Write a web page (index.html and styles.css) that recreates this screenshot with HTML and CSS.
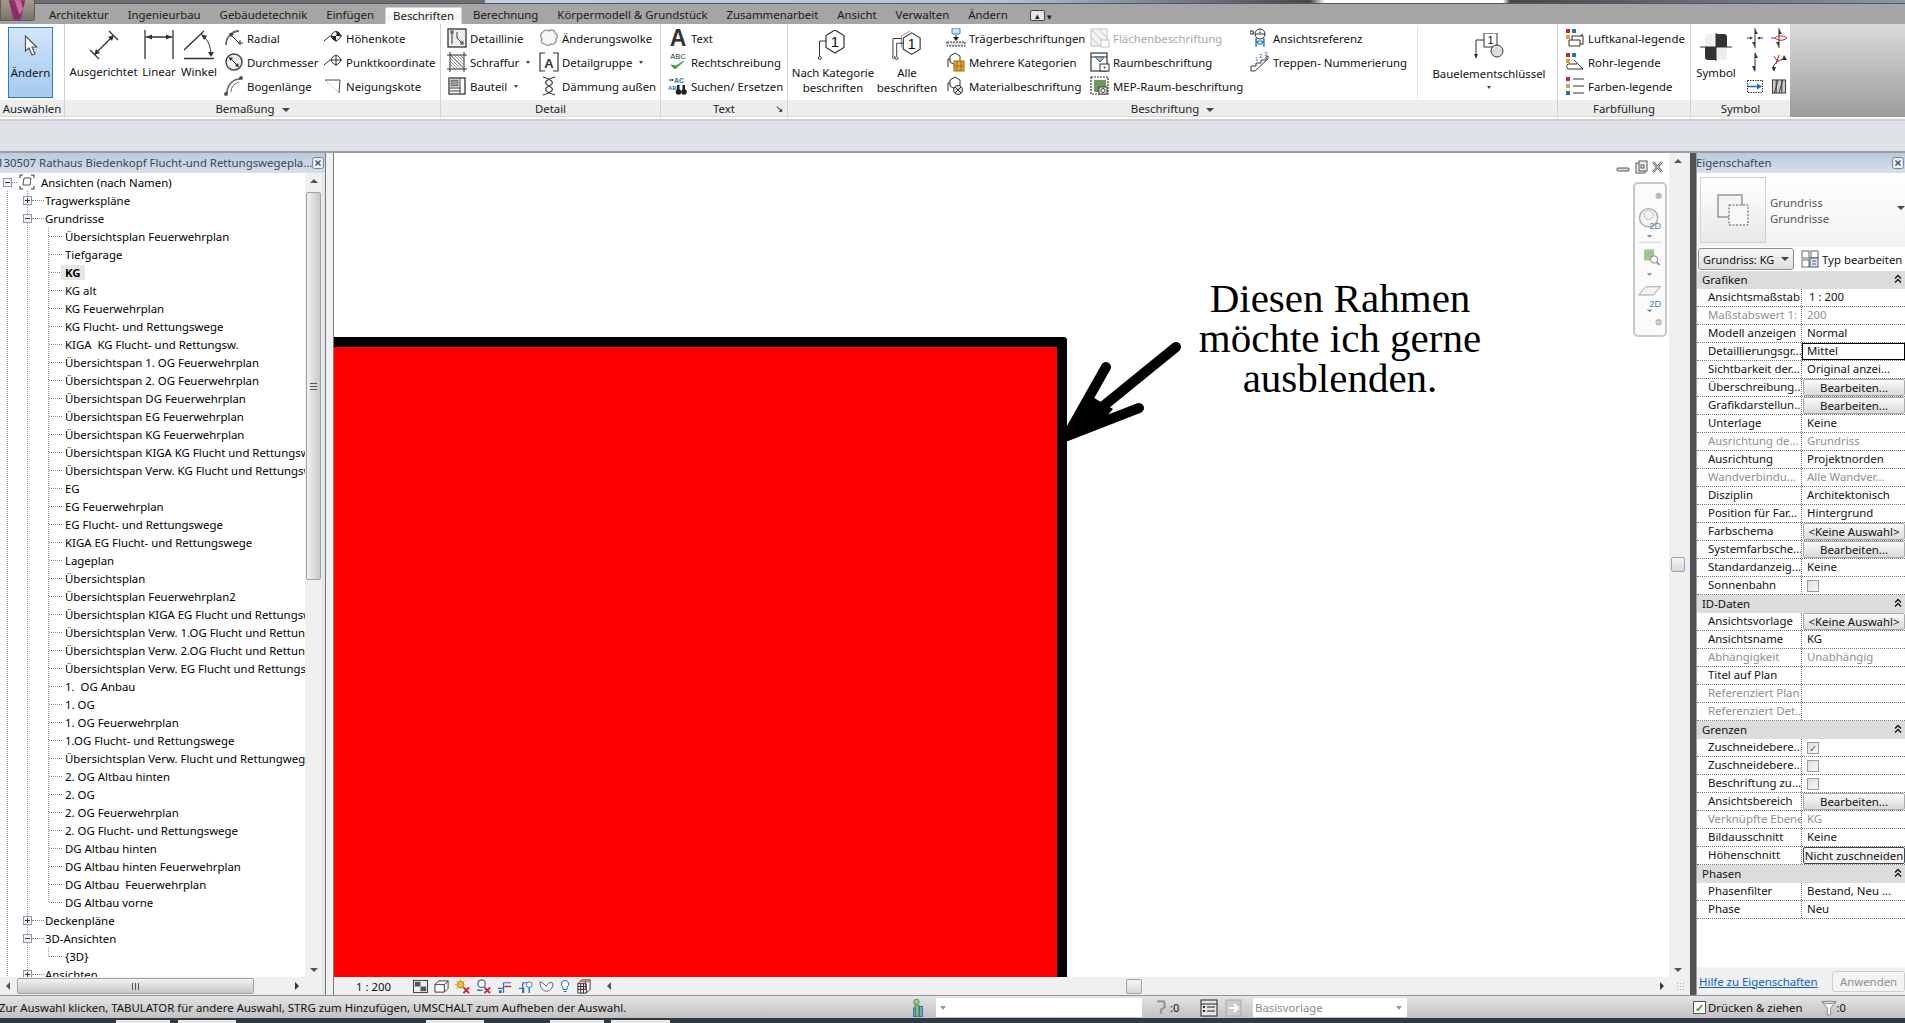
FILE: index.html
```html
<!DOCTYPE html>
<html lang="de">
<head>
    <meta charset="UTF-8">
    <title>Revit - Beschriften</title>
    <link rel="stylesheet" href="styles.css">
</head>
<body>
    <!-- icon sprite -->
    <svg class="sprite" xmlns="http://www.w3.org/2000/svg">
        <symbol id="i-cursor" viewBox="0 0 14 22"><path d="M1.5 1v15l3.5-3 3 7 3-1.300-3-6.700h4.500z" fill="#fff" stroke="#555" stroke-width="1.200"/></symbol>
        <symbol id="i-aligned" viewBox="0 0 30 30"><path d="M1 20l9 9M20 1l9 9" stroke="#333" stroke-width="1.300" fill="none"/><path d="M6 24L24 6" stroke="#333" stroke-width="1.300"/><path d="M5 25l2-6 4 4zM25 5l-2 6-4-4z" fill="#333"/></symbol>
        <symbol id="i-linear" viewBox="0 0 30 30"><path d="M1 0v29M29 0v29M2 7h26" stroke="#333" stroke-width="1.300" fill="none"/><path d="M2 7l6-2.500v5zM28 7l-6-2.500v5z" fill="#333"/></symbol>
        <symbol id="i-angle" viewBox="0 0 30 30"><path d="M0 28.500h30M0 20L20 1" stroke="#333" stroke-width="1.300" fill="none"/><path d="M19 6c5 4 8 11 8 20" stroke="#333" fill="none"/><path d="M17 4l6 2-3 4zM27 27l-3-5h6z" fill="#333"/></symbol>
        <symbol id="i-radial" viewBox="0 0 20 20"><path d="M2 17C2 9 8 3 15 3" stroke="#666" stroke-width="1.800" fill="none"/><path d="M6 6l9 9M16 12v5M14 15h5" stroke="#333" fill="none"/><path d="M5 5l5 1-3 3z" fill="#333"/></symbol>
        <symbol id="i-diameter" viewBox="0 0 20 20"><circle cx="10" cy="10" r="8" fill="#eee" stroke="#444" stroke-width="1.500"/><path d="M6 6l8 8" stroke="#333"/><path d="M5 5l4 1-3 3zM15 15l-4-1 3-3z" fill="#333"/></symbol>
        <symbol id="i-arc" viewBox="0 0 20 20"><path d="M3 17C3 9 9 3 16 3" stroke="#666" stroke-width="1.600" fill="none"/><path d="M7 16C7 11 11 7 15 6" stroke="#666" fill="none"/><rect x="1" y="17" width="2" height="2" fill="#fff" stroke="#000"/><rect x="16" y="1" width="2" height="2" fill="#fff" stroke="#000"/></symbol>
        <symbol id="i-spot" viewBox="0 0 20 20"><path d="M1 13l6-5h12M13 3v11" stroke="#333" fill="none"/><circle cx="13" cy="8" r="4.500" fill="#fff" stroke="#333"/><path d="M13 3.500a4.500 4.500 0 0 1 0 4.500h4.500a4.500 4.500 0 0 0-4.500-4.500zM13 8v4.500a4.500 4.500 0 0 1-4.500-4.500z" fill="#222"/></symbol>
        <symbol id="i-coord" viewBox="0 0 20 20"><path d="M1 13l6-5h12M13 3v11" stroke="#333" fill="none"/><circle cx="13" cy="8" r="4.500" fill="none" stroke="#333"/></symbol>
        <symbol id="i-slope" viewBox="0 0 20 20"><path d="M2 4l14 13" stroke="#8fb0d0" stroke-dasharray="1.500 1" fill="none"/><path d="M2 4h15l-1 13" stroke="#444" fill="none"/></symbol>
        <symbol id="i-detail" viewBox="0 0 20 20"><rect x="1" y="1" width="18" height="18" fill="#eee" stroke="#333" stroke-width="1.300"/><path d="M5 4v12M15 15L10 10V4" stroke="#333" fill="none"/><rect x="4" y="3" width="2" height="2" fill="#fff" stroke="#333"/><rect x="14" y="14" width="2" height="2" fill="#fff" stroke="#333"/></symbol>
        <symbol id="i-hatch" viewBox="0 0 20 20"><path d="M4 3l12 12M7 3l10 10M10 3l7 7M13 3l4 4M3 6l11 11M3 9l8 8M3 12l5 5M3 3l14 14" stroke="#777" stroke-width=".8"/><path d="M3 0v20M17 0v20M0 3h20M0 17h20" stroke="#333"/></symbol>
        <symbol id="i-part" viewBox="0 0 20 20"><rect x="2" y="2" width="16" height="16" fill="#fff" stroke="#333" stroke-width="1.300"/><rect x="4" y="4" width="7" height="6" fill="#999" stroke="#333" stroke-width=".6"/><path d="M13 3v14M3 12h10M3 15h10" stroke="#333" fill="none"/></symbol>
        <symbol id="i-cloud" viewBox="0 0 20 20"><path d="M4 4c2-3 5-2 6-1 2-2 6-1 6 2 3 1 3 5 1 6 1 4-3 6-5 5-2 2-5 2-6 0-3 0-5-3-3-5-2-2-2-6 1-7z" fill="#f7f7f7" stroke="#888" stroke-width="1.200"/></symbol>
        <symbol id="i-group" viewBox="0 0 20 20"><path d="M6 1H1v18h5M14 1h5v18h-5" stroke="#333" stroke-width="1.200" fill="none" transform="translate(0 0)"/><text x="10" y="16" text-anchor="middle" font-size="13" font-weight="700" font-family="Liberation Sans" fill="#333">A</text></symbol>
        <symbol id="i-insul" viewBox="0 0 20 20"><path d="M4 1c10 3 12 6 6 9-6 3-4 6 6 9M16 1C6 4 4 7 10 10c6 3 4 6-6 9" stroke="#333" stroke-width="1.200" fill="none"/></symbol>
        <symbol id="i-abc" viewBox="0 0 20 20"><text x="10" y="7" text-anchor="middle" font-size="7.500" font-family="Liberation Sans" fill="#333">ABC</text><path d="M3 13l4 4 9-8-8 5z" fill="#3da33d" stroke="#3da33d"/></symbol>
        <symbol id="i-find" viewBox="0 0 20 20"><text x="6" y="7" font-size="7" font-weight="700" font-family="Liberation Sans" fill="#1b6fb8">AC</text><text x="0" y="14" font-size="6" font-weight="700" font-family="Liberation Sans" fill="#1b6fb8">AB</text><path d="M1 4h4" stroke="#222"/><path d="M4 3l2 1-2 1z" fill="#222"/><circle cx="10.500" cy="16" r="2.800" fill="#222"/><circle cx="16" cy="16" r="2.800" fill="#222"/><rect x="9" y="9" width="2.500" height="5" fill="#222"/><rect x="14.500" y="9" width="2.500" height="5" fill="#222"/></symbol>
        <symbol id="i-tag" viewBox="0 0 30 32"><path d="M17 0l9 5.500v12L17 23l-9-5.500v-12z" fill="#fff" stroke="#333" stroke-width="1.200"/><path d="M8 11H1.500v15" stroke="#333" fill="none"/><circle cx="1.800" cy="28" r="1.500" fill="#fff" stroke="#333"/><text x="17" y="17" text-anchor="middle" font-size="15" font-family="Liberation Sans" fill="#111">1</text></symbol>
        <symbol id="i-tagall" viewBox="0 0 32 34"><path d="M19 1l-9 5.500v12" stroke="#888" fill="none"/><path d="M21 3l9 5.500v12L21 26l-9-5.500v-12z" fill="#fff" stroke="#333" stroke-width="1.200"/><path d="M12 14H5v14M10 9H1v18" stroke="#333" fill="none"/><circle cx="5" cy="30" r="1.400" fill="#fff" stroke="#333"/><circle cx="1.500" cy="29" r="1.400" fill="#fff" stroke="#333"/><text x="21" y="20" text-anchor="middle" font-size="15" font-family="Liberation Sans" fill="#111">1</text></symbol>
        <symbol id="i-beam" viewBox="0 0 20 20"><rect x="6" y="0" width="8" height="6" rx="1" fill="#cfe4f7" stroke="#2a7fc4"/><path d="M10 7v4" stroke="#222"/><path d="M7 9l3 4 3-4z" fill="#222"/><rect x="1" y="14" width="18" height="4" fill="#ddd" stroke="#333" stroke-dasharray="2 1"/></symbol>
        <symbol id="i-multi" viewBox="0 0 20 20"><path d="M9 1l5 3v6l-5 3-5-3V4z" fill="#fff" stroke="#333"/><path d="M4 7H2v8" stroke="#333" fill="none"/><rect x="8" y="9" width="10" height="10" fill="#e8a93a" stroke="#9a6a12"/><path d="M11 9v10M15 9v10M8 14h10" stroke="#9a6a12"/></symbol>
        <symbol id="i-material" viewBox="0 0 20 20"><path d="M9 1l5 3v6l-5 3-5-3V4z" fill="#fff" stroke="#333"/><path d="M4 7H2v8" stroke="#333" fill="none"/><circle cx="12" cy="14" r="4.500" fill="#ddd" stroke="#333"/><path d="M9 11l6 6M15 11l-6 6" stroke="#333"/></symbol>
        <symbol id="i-area" viewBox="0 0 20 20" opacity=".35"><rect x="1" y="1" width="16" height="17" fill="#ddd" stroke="#555"/><path d="M1 1l16 17M9 1l8 9M1 9l8 9" stroke="#555"/><rect x="11" y="12" width="8" height="7" fill="#fff" stroke="#555"/></symbol>
        <symbol id="i-room" viewBox="0 0 20 20"><rect x="1" y="1" width="16" height="18" fill="#fff" stroke="#333" stroke-width="1.200"/><path d="M1 5h16" stroke="#333"/><path d="M5 5h9l-4 5z" fill="#a8c8e8" stroke="#456"/><rect x="10" y="12" width="9" height="7" fill="#fff" stroke="#333"/><circle cx="14.500" cy="15.500" r="1" fill="#333"/></symbol>
        <symbol id="i-mep" viewBox="0 0 20 20"><rect x="1" y="1" width="17" height="17" fill="#fff" stroke="#333" stroke-width="1.200" stroke-dasharray="2 1"/><rect x="4" y="4" width="12" height="12" fill="#6f9a5e"/><rect x="9" y="11" width="8" height="7" fill="#fff" stroke="#333"/><circle cx="13" cy="14.500" r="2" fill="#fff" stroke="#333"/></symbol>
        <symbol id="i-viewref" viewBox="0 0 20 20"><path d="M0 5h4" stroke="#333"/><rect x="0" y="3" width="3" height="3" fill="#fff" stroke="#333"/><circle cx="10" cy="6" r="5" fill="#fff" stroke="#333"/><path d="M5 6h10" stroke="#333"/><path d="M7 11H6v7h1M13 11h1v7h-1M6 14h8" stroke="#1b6fb8" stroke-width="1.300" fill="none"/><rect x="8" y="13" width="4" height="3" fill="#fff" stroke="#1b6fb8"/><text x="10" y="5" text-anchor="middle" font-size="5" font-family="Liberation Sans" fill="#222">1</text></symbol>
        <symbol id="i-stairs" viewBox="0 0 20 20"><path d="M1 14h5v-3h5V8h5V5l2-1M1 14v5h4l13-12V4" fill="#f4f4f4" stroke="#444"/><text x="5" y="9" font-size="6" font-family="Liberation Sans" fill="#1b6fb8">1</text><text x="9" y="6" font-size="6" font-family="Liberation Sans" fill="#1b6fb8">2</text><text x="14" y="4" font-size="6" font-family="Liberation Sans" fill="#1b6fb8">3</text></symbol>
        <symbol id="i-key" viewBox="0 0 30 26"><rect x="10" y="0" width="13" height="14" fill="#fff" stroke="#333"/><text x="16.500" y="11" text-anchor="middle" font-size="11" font-family="Liberation Sans" fill="#111">1</text><circle cx="23" cy="18" r="6" fill="#ddd" stroke="#333"/><path d="M10 7H2v17" stroke="#333" fill="none"/><path d="M0 21l2 5 2-5z" fill="#333"/></symbol>
        <symbol id="i-duct" viewBox="0 0 20 20"><rect x="1" y="1" width="4" height="4" fill="#b8312f"/><rect x="7" y="1" width="4" height="4" fill="#2a6fb5"/><rect x="1" y="7" width="4" height="4" fill="#e59b2b"/><rect x="7" y="8" width="11" height="8" fill="#fff" stroke="#333"/><path d="M4 12h11v6H4zM15 8l3-2" stroke="#333" fill="#fff"/></symbol>
        <symbol id="i-pipe" viewBox="0 0 20 20"><rect x="1" y="1" width="4" height="4" fill="#b8312f"/><rect x="7" y="1" width="4" height="4" fill="#2a6fb5"/><rect x="1" y="7" width="4" height="4" fill="#e59b2b"/><path d="M9 8l9 9H3a3 3 0 0 1 0-5h9" fill="#fff" stroke="#333"/></symbol>
        <symbol id="i-colors" viewBox="0 0 20 20"><rect x="1" y="1" width="4" height="4" fill="#b8312f"/><rect x="1" y="8" width="4" height="4" fill="#e59b2b"/><rect x="1" y="15" width="4" height="4" fill="#2a6fb5"/><path d="M8 3h11M8 10h11M8 17h11" stroke="#333"/></symbol>
        <symbol id="i-symbol" viewBox="0 0 32 28"><rect x="5" y="1" width="22" height="26" rx="3" fill="#eee"/><path d="M16 1h8a3 3 0 0 1 3 3v10H16zM5 14h11v13H8a3 3 0 0 1-3-3z" fill="#333"/><path d="M0 14h32M16 0v28" stroke="#333"/></symbol>
        <symbol id="i-sym1" viewBox="0 0 16 20"><path d="M8 0v20M0 10h3M13 10h3" stroke="#333"/><path d="M8 1l3 5H8zM8 19l-3-5h3zM3 8.500L6 10l-3 1.500zM13 8.500L10 10l3 1.500z" fill="#333"/></symbol>
        <symbol id="i-sym2" viewBox="0 0 16 20"><path d="M8 0v20" stroke="#333"/><path d="M8 1l3 5H8zM8 19l-3-5h3z" fill="#333"/><path d="M0 10h4c3-3 8-3 12 0-4 3-8 3-12 0" stroke="#d01c1c" fill="none"/></symbol>
        <symbol id="i-sym3" viewBox="0 0 16 20"><path d="M8 1v18" stroke="#333"/><path d="M8 0l3 6H8zM8 20l-3-6h3z" fill="#333"/></symbol>
        <symbol id="i-sym4" viewBox="0 0 16 20"><path d="M2 18c0-6 4-10 12-11" stroke="#333" fill="none"/><path d="M13 3l3 5h-5zM3 20l-2-5h4z" fill="#333"/><path d="M3 4l4 6M8 3l-3 9" stroke="#d01c1c"/></symbol>
        <symbol id="i-sym5" viewBox="0 0 16 14"><rect x=".5" y="1" width="15" height="12" fill="#fff" stroke="#333" stroke-dasharray="1.500 1"/><path d="M1 7h10" stroke="#1b6fb8" stroke-width="1.500"/><path d="M10 4l5 3-5 3z" fill="#1b6fb8"/></symbol>
        <symbol id="i-sym6" viewBox="0 0 16 16"><rect x="1" y="1" width="14" height="14" fill="#ccc" stroke="#333"/><path d="M3 15L7 1M8 15l4-14M5 15V1M11 15V1" stroke="#333" fill="none"/></symbol>
        <symbol id="i-views" viewBox="0 0 16 16"><path d="M1 4V1h3M12 1h3v3M15 12v3h-3M4 15H1v-3" stroke="#333" fill="none"/><path d="M5 4h7l-1 7H4z" fill="#fff" stroke="#555"/></symbol>
        <symbol id="i-close" viewBox="0 0 12 12"><rect x=".5" y=".5" width="11" height="11" rx="2" fill="#e8edf3" stroke="#7a8795"/><path d="M3.500 3.500l5 5M8.500 3.500l-5 5" stroke="#445" stroke-width="1.300"/></symbol>
        <symbol id="i-fold" viewBox="0 0 8 10"><path d="M1 4.500L4 1.500l3 3M1 8.500L4 5.500l3 3" stroke="#111" stroke-width="1.300" fill="none"/></symbol>
        <symbol id="i-sheets" viewBox="0 0 32 32"><rect x="1" y="1" width="24" height="22" fill="#f4f4f4" stroke="#666"/><rect x="12" y="11" width="19" height="20" fill="#f8f8f8" stroke="#555" stroke-dasharray="2 1.500"/></symbol>
        <symbol id="i-edit" viewBox="0 0 18 18"><rect x="1" y="1" width="7" height="7" fill="#fff" stroke="#666"/><rect x="10" y="1" width="7" height="7" fill="#fff" stroke="#666"/><rect x="1" y="10" width="7" height="7" fill="#fff" stroke="#666"/><rect x="9" y="8" width="8" height="9" fill="#dbe8f5" stroke="#456"/><path d="M11 11h4M11 14h4" stroke="#456"/></symbol>
        <symbol id="i-funnel" viewBox="0 0 20 20"><path d="M1 2h18l-7 8v8l-4 1v-9z" fill="#fff" stroke="#777"/><ellipse cx="10" cy="3" rx="8" ry="1.500" fill="#ddd" stroke="#777"/></symbol>
        <symbol id="i-vb1" viewBox="0 0 16 14"><rect x=".5" y=".5" width="15" height="13" fill="#eee" stroke="#333"/><rect x="2" y="2" width="6" height="5" fill="#555"/><rect x="8" y="7" width="6" height="5" fill="#555"/></symbol>
        <symbol id="i-vb2" viewBox="0 0 16 14"><path d="M1 5h10v8H1zM1 5l4-4h10l-4 4M11 13l4-4V1" fill="#fff" stroke="#333"/></symbol>
        <symbol id="i-vb3" viewBox="0 0 16 16"><circle cx="6" cy="6" r="3.500" fill="#f2c22e" stroke="#a97c10"/><path d="M6 0v2M0 6h2M1.500 1.500L3 3M10.500 1.500L9 3M1.500 10.500L3 9" stroke="#d79a1a"/><path d="M9 9l6 6M15 9l-6 6" stroke="#c22" stroke-width="2"/></symbol>
        <symbol id="i-vb4" viewBox="0 0 16 16"><circle cx="6" cy="5" r="4" fill="#fff" stroke="#2a6fb5" stroke-width="1.300"/><path d="M1 12h6" stroke="#2a6fb5" stroke-width="1.500"/><path d="M9 9l6 6M15 9l-6 6" stroke="#c22" stroke-width="2"/></symbol>
        <symbol id="i-vb5" viewBox="0 0 16 16"><path d="M1 10h6v5M7 4h8M7 4v11" stroke="#2a6fb5" stroke-width="1.300" fill="none"/><path d="M8 8h7" stroke="#c22" stroke-width="1.500"/><rect x="2" y="12" width="3" height="3" fill="#2a6fb5"/></symbol>
        <symbol id="i-vb6" viewBox="0 0 16 16"><path d="M1 10h5v5M5 4h5M5 4v11" stroke="#2a6fb5" stroke-width="1.300" fill="none"/><circle cx="12" cy="6" r="3" fill="#fff" stroke="#2a6fb5"/><path d="M12 9v6" stroke="#2a6fb5" stroke-width="1.500"/></symbol>
        <symbol id="i-vb7" viewBox="0 0 16 14"><path d="M1 2c0 7 4 10 7 10s7-3 7-8c-3-3-6 0-7 3-2-2-5-5-7-5z" fill="#fff" stroke="#456"/></symbol>
        <symbol id="i-vb8" viewBox="0 0 10 14"><path d="M5 1a3.500 3.500 0 0 1 2 6.500V10H3V7.500A3.500 3.500 0 0 1 5 1z" fill="#fff" stroke="#2a6fb5"/><path d="M3.500 12h3" stroke="#2a6fb5"/></symbol>
        <symbol id="i-vb9" viewBox="0 0 16 16"><path d="M2 5h9v10H2zM2 5l4-4h9v10l-4 4M5 5v10M8 5v10M2 8h9M2 11h9" fill="#fff" stroke="#222"/><path d="M5 3h9M10 2v9" stroke="#c22"/></symbol>
        <symbol id="i-worksets" viewBox="0 0 14 26"><circle cx="5" cy="5" r="3.500" fill="#9ccf84" stroke="#4a7a3a"/><path d="M3 9h5v15H3z" fill="#8bc27a" stroke="#4a7a3a"/><rect x="9" y="11" width="4" height="13" fill="#6ea7d8" stroke="#27628f"/><rect x="1" y="13" width="3" height="11" fill="#6ea7d8" stroke="#27628f"/></symbol>
        <symbol id="i-design" viewBox="0 0 18 18"><rect x="1" y="1" width="16" height="16" fill="#e4e4e4" stroke="#222"/><path d="M1 5h16" stroke="#222"/><rect x="3" y="7" width="2" height="2" fill="#222"/><rect x="3" y="11" width="2" height="2" fill="#222"/><path d="M7 8h8M7 12h8" stroke="#222"/></symbol>
        <symbol id="i-design2" viewBox="0 0 18 18"><rect x="1" y="1" width="15" height="16" fill="#ccc" stroke="#aaa"/><path d="M4 9h8M9 5l4 4-4 4" stroke="#fff" stroke-width="2" fill="none"/></symbol>
        <symbol id="i-wand" viewBox="0 0 18 24"><path d="M4 3h9l1 8-5 3v6" stroke="#999" stroke-width="3" fill="none"/></symbol>
    </svg>

    <div class="top-strip"></div>
    <button class="app-button">
        <svg class="app-logo" viewBox="0 0 34 20"><path d="M8 0h17l-5 20h-7z" fill="#8c2c6a"/><path d="M14 0h6l3 9-4 6z" fill="#d06aa8"/></svg>
    </button>

    <nav class="tabs">
        <span class="tab">Architektur</span>
        <span class="tab">Ingenieurbau</span>
        <span class="tab">Gebäudetechnik</span>
        <span class="tab">Einfügen</span>
        <span class="tab active">Beschriften</span>
        <span class="tab">Berechnung</span>
        <span class="tab">Körpermodell &amp; Grundstück</span>
        <span class="tab">Zusammenarbeit</span>
        <span class="tab">Ansicht</span>
        <span class="tab">Verwalten</span>
        <span class="tab">Ändern</span>
        <span class="tab-mini">▴</span><span class="tab-caret">▾</span>
    </nav>

    <section class="ribbon">
        <div class="group g-select">
            <div class="group-body">
                <div class="modify-btn">
                    <svg class="cursor-icon"><use href="#i-cursor"/></svg>
                    <span>Ändern</span>
                </div>
            </div>
            <div class="group-label">Auswählen</div>
        </div>

        <div class="group g-dim">
            <div class="group-body">
                <div class="large l-aligned"><svg class="large-icon"><use href="#i-aligned"/></svg><span>Ausgerichtet</span></div>
                <div class="large l-linear"><svg class="large-icon"><use href="#i-linear"/></svg><span>Linear</span></div>
                <div class="large l-angle"><svg class="large-icon"><use href="#i-angle"/></svg><span>Winkel</span></div>
                <div class="col c-dim1">
                    <div class="small"><svg class="ic"><use href="#i-radial"/></svg>Radial</div>
                    <div class="small"><svg class="ic"><use href="#i-diameter"/></svg>Durchmesser</div>
                    <div class="small"><svg class="ic"><use href="#i-arc"/></svg>Bogenlänge</div>
                </div>
                <div class="col c-dim2">
                    <div class="small"><svg class="ic"><use href="#i-spot"/></svg>Höhenkote</div>
                    <div class="small"><svg class="ic"><use href="#i-coord"/></svg>Punktkoordinate</div>
                    <div class="small"><svg class="ic"><use href="#i-slope"/></svg>Neigungskote</div>
                </div>
            </div>
            <div class="group-label">Bemaßung <i class="caret"></i></div>
        </div>

        <div class="group g-detail">
            <div class="group-body">
                <div class="col c-det1">
                    <div class="small"><svg class="ic"><use href="#i-detail"/></svg>Detaillinie</div>
                    <div class="small"><svg class="ic"><use href="#i-hatch"/></svg>Schraffur<i class="caret tiny"></i></div>
                    <div class="small"><svg class="ic"><use href="#i-part"/></svg>Bauteil<i class="caret tiny"></i></div>
                </div>
                <div class="col c-det2">
                    <div class="small"><svg class="ic"><use href="#i-cloud"/></svg>Änderungswolke</div>
                    <div class="small"><svg class="ic"><use href="#i-group"/></svg>Detailgruppe<i class="caret tiny"></i></div>
                    <div class="small"><svg class="ic"><use href="#i-insul"/></svg>Dämmung außen</div>
                </div>
            </div>
            <div class="group-label">Detail</div>
        </div>

        <div class="group g-text">
            <div class="group-body">
                <div class="col c-text">
                    <div class="small"><svg class="ic"><text x="10" y="18" text-anchor="middle" font-size="23" font-weight="700" font-family="Liberation Sans" fill="#333">A</text></svg>Text</div>
                    <div class="small"><svg class="ic"><use href="#i-abc"/></svg>Rechtschreibung</div>
                    <div class="small"><svg class="ic"><use href="#i-find"/></svg>Suchen/ Ersetzen</div>
                </div>
            </div>
            <div class="group-label">Text<span class="launcher">↘</span></div>
        </div>

        <div class="group g-tag">
            <div class="group-body">
                <div class="large l-cat"><svg class="tag-icon"><use href="#i-tag"/></svg><span>Nach Kategorie<br>beschriften</span></div>
                <div class="large l-all"><svg class="tag-icon"><use href="#i-tagall"/></svg><span>Alle<br>beschriften</span></div>
                <div class="col c-tag1">
                    <div class="small"><svg class="ic"><use href="#i-beam"/></svg>Trägerbeschriftungen</div>
                    <div class="small"><svg class="ic"><use href="#i-multi"/></svg>Mehrere Kategorien</div>
                    <div class="small"><svg class="ic"><use href="#i-material"/></svg>Materialbeschriftung</div>
                </div>
                <div class="col c-tag2">
                    <div class="small off"><svg class="ic"><use href="#i-area"/></svg>Flächenbeschriftung</div>
                    <div class="small"><svg class="ic"><use href="#i-room"/></svg>Raumbeschriftung</div>
                    <div class="small"><svg class="ic"><use href="#i-mep"/></svg>MEP-Raum-beschriftung</div>
                </div>
                <div class="col c-tag3">
                    <div class="small"><svg class="ic"><use href="#i-viewref"/></svg>Ansichtsreferenz</div>
                    <div class="small"><svg class="ic"><use href="#i-stairs"/></svg>Treppen- Nummerierung</div>
                </div>
                <div class="large l-key"><svg class="key-icon"><use href="#i-key"/></svg><span>Bauelementschlüssel</span><i class="caret tiny"></i></div>
            </div>
            <div class="group-label">Beschriftung <i class="caret"></i></div>
        </div>

        <div class="group g-fill">
            <div class="group-body">
                <div class="col c-fill">
                    <div class="small"><svg class="ic"><use href="#i-duct"/></svg>Luftkanal-legende</div>
                    <div class="small"><svg class="ic"><use href="#i-pipe"/></svg>Rohr-legende</div>
                    <div class="small"><svg class="ic"><use href="#i-colors"/></svg>Farben-legende</div>
                </div>
            </div>
            <div class="group-label">Farbfüllung</div>
        </div>

        <div class="group g-symbol">
            <div class="group-body">
                <div class="large l-symbol"><svg class="symbol-icon"><use href="#i-symbol"/></svg><span>Symbol</span></div>
                <div class="symbol-grid">
                    <svg class="sg"><use href="#i-sym1"/></svg>
                    <svg class="sg"><use href="#i-sym2"/></svg>
                    <svg class="sg"><use href="#i-sym3"/></svg>
                    <svg class="sg"><use href="#i-sym4"/></svg>
                    <svg class="sg"><use href="#i-sym5"/></svg>
                    <svg class="sg"><use href="#i-sym6"/></svg>
                </div>
            </div>
            <div class="group-label">Symbol</div>
        </div>
        <div class="ribbon-rest"></div>
    </section>

    <div class="options-bar"></div>

    <main class="workspace">
        <aside class="browser">
            <header class="panel-head">
                <span class="browser-title">130507 Rathaus Biedenkopf Flucht-und Rettungswegepla...</span>
                <svg class="panel-close"><use href="#i-close"/></svg>
            </header>
            <div class="tree-view">
                <div class="tree-clip">
                    <ul class="tree root">
                        <li class="row top"><b class="box minus"></b><i class="tie"></i><svg class="view-ic"><use href="#i-views"/></svg>Ansichten (nach Namen)</li>
                        <li class="row sub"><b class="box plus"></b><i class="tie"></i>Tragwerkspläne</li>
                        <li class="row sub"><b class="box minus"></b><i class="tie"></i>Grundrisse</li>
                        <li>
                            <ul class="tree leaves">
                                <li class="row leaf">Übersichtsplan Feuerwehrplan</li>
                                <li class="row leaf">Tiefgarage</li>
                                <li class="row leaf"><span class="current">KG</span></li>
                                <li class="row leaf">KG alt</li>
                                <li class="row leaf">KG Feuerwehrplan</li>
                                <li class="row leaf">KG Flucht- und Rettungswege</li>
                                <li class="row leaf">KIGA  KG Flucht- und Rettungsw.</li>
                                <li class="row leaf">Übersichtspan 1. OG Feuerwehrplan</li>
                                <li class="row leaf">Übersichtspan 2. OG Feuerwehrplan</li>
                                <li class="row leaf">Übersichtspan DG Feuerwehrplan</li>
                                <li class="row leaf">Übersichtspan EG Feuerwehrplan</li>
                                <li class="row leaf">Übersichtspan KG Feuerwehrplan</li>
                                <li class="row leaf">Übersichtspan KIGA KG Flucht und Rettungswege</li>
                                <li class="row leaf">Übersichtspan Verw. KG Flucht und Rettungswege</li>
                                <li class="row leaf">EG</li>
                                <li class="row leaf">EG Feuerwehrplan</li>
                                <li class="row leaf">EG Flucht- und Rettungswege</li>
                                <li class="row leaf">KIGA EG Flucht- und Rettungswege</li>
                                <li class="row leaf">Lageplan</li>
                                <li class="row leaf">Übersichtsplan</li>
                                <li class="row leaf">Übersichtsplan Feuerwehrplan2</li>
                                <li class="row leaf">Übersichtsplan KIGA EG Flucht und Rettungswege</li>
                                <li class="row leaf">Übersichtsplan Verw. 1.OG Flucht und Rettungswege</li>
                                <li class="row leaf">Übersichtsplan Verw. 2.OG Flucht und Rettungswege</li>
                                <li class="row leaf">Übersichtsplan Verw. EG Flucht und Rettungswege</li>
                                <li class="row leaf">1.  OG Anbau</li>
                                <li class="row leaf">1. OG</li>
                                <li class="row leaf">1. OG Feuerwehrplan</li>
                                <li class="row leaf">1.OG Flucht- und Rettungswege</li>
                                <li class="row leaf">Übersichtsplan Verw. Flucht und Rettungwege</li>
                                <li class="row leaf">2. OG Altbau hinten</li>
                                <li class="row leaf">2. OG</li>
                                <li class="row leaf">2. OG Feuerwehrplan</li>
                                <li class="row leaf">2. OG Flucht- und Rettungswege</li>
                                <li class="row leaf">DG Altbau hinten</li>
                                <li class="row leaf">DG Altbau hinten Feuerwehrplan</li>
                                <li class="row leaf">DG Altbau  Feuerwehrplan</li>
                                <li class="row leaf">DG Altbau vorne</li>
                            </ul>
                        </li>
                        <li class="row sub"><b class="box plus"></b><i class="tie"></i>Deckenpläne</li>
                        <li class="row sub"><b class="box minus"></b><i class="tie"></i>3D-Ansichten</li>
                        <li>
                            <ul class="tree leaves">
                                <li class="row leaf">{3D}</li>
                            </ul>
                        </li>
                        <li class="row sub"><b class="box plus"></b><i class="tie"></i>Ansichten</li>
                    </ul>
                </div>
                <div class="vscroll tree-scroll">
                    <i class="arrow up"></i>
                    <div class="thumb tree-thumb"><span class="grip-h"></span></div>
                    <i class="arrow down"></i>
                </div>
            </div>
            <div class="hscroll">
                <i class="arrow left"></i>
                <div class="thumb tree-hthumb"><span class="grip-v"></span></div>
                <i class="arrow right"></i>
            </div>
        </aside>

        <section class="view">
            <div class="view-main">
                <div class="canvas">
                    <div class="frame"></div>
                    <svg class="pointer" viewBox="0 0 130 110">
                        <path d="M123 14L16 101M53 34L14 103M86 75L14 103" stroke="#000" stroke-width="10" stroke-linecap="round" fill="none"/>
                        <path d="M14 106L36 62 60 76 50 88z" fill="#000"/>
                    </svg>
                    <p class="note">Diesen Rahmen<br>möchte ich gerne<br>ausblenden.</p>
                    <div class="win-ctrl">
                        <svg viewBox="0 0 48 14">
                            <rect x="1" y="8" width="12" height="3" rx="1" fill="#ddd" stroke="#555"/>
                            <rect x="20" y="3" width="9" height="10" fill="#eee" stroke="#555"/>
                            <rect x="23" y="1" width="8" height="10" fill="#eee" stroke="#555"/>
                            <rect x="25" y="5" width="3" height="3" fill="#fff" stroke="#555"/>
                            <path d="M37 2l9 10M46 2l-9 10" stroke="#555" stroke-width="2.500"/>
                            <path d="M37 2l9 10M46 2l-9 10" stroke="#eee" stroke-width="1"/>
                        </svg>
                    </div>
                    <div class="nav-bar">
                        <svg viewBox="0 0 33 154">
                            <circle cx="26" cy="7" r="3.500" fill="#bbb"/>
                            <circle cx="15" cy="31" r="10" fill="#f4f4f4" stroke="#aaa" stroke-width="1.500"/>
                            <circle cx="15" cy="28" r="5" fill="none" stroke="#bbb"/>
                            <text class="two-d" x="16" y="43">2D</text>
                            <path d="M13 50h6l-3 3z" fill="#888"/>
                            <path d="M4 58h25" stroke="#ccc"/>
                            <rect x="10" y="66" width="11" height="12" fill="#9cc589"/>
                            <circle cx="21" cy="77" r="4" fill="#fff" stroke="#777"/>
                            <path d="M24 80l3 3" stroke="#777" stroke-width="1.500"/>
                            <path d="M13 92h6l-3 3z" fill="#888"/>
                            <path d="M4 116l8-9h16l-8 9z" fill="#f4f4f4" stroke="#999"/>
                            <text class="two-d" x="16" y="129">2D</text>
                            <path d="M13 132h6l-3 3z" fill="#888"/>
                            <circle cx="26" cy="146" r="3.500" fill="#bbb"/>
                            <path d="M24 146h4" stroke="#fff"/>
                        </svg>
                    </div>
                </div>
                <div class="vscroll view-scroll">
                    <i class="arrow up"></i>
                    <div class="thumb view-thumb"></div>
                    <i class="arrow down"></i>
                </div>
            </div>
            <div class="view-bar">
                <span class="scale">1 : 200</span>
                <div class="view-icons">
                    <svg class="vb"><use href="#i-vb1"/></svg>
                    <svg class="vb"><use href="#i-vb2"/></svg>
                    <svg class="vb"><use href="#i-vb3"/></svg>
                    <svg class="vb"><use href="#i-vb4"/></svg>
                    <svg class="vb"><use href="#i-vb5"/></svg>
                    <svg class="vb"><use href="#i-vb6"/></svg>
                    <svg class="vb"><use href="#i-vb7"/></svg>
                    <svg class="vb vb-small"><use href="#i-vb8"/></svg>
                    <svg class="vb"><use href="#i-vb9"/></svg>
                </div>
                <i class="arrow left"></i>
                <div class="thumb view-hthumb"></div>
                <i class="arrow right"></i>
                <span class="size-grip"></span>
            </div>
        </section>

        <aside class="props">
            <header class="panel-head props-head">
                <span class="props-title">Eigenschaften</span>
                <svg class="panel-close"><use href="#i-close"/></svg>
            </header>
            <div class="type-picker">
                <div class="type-thumb"><svg class="sheets"><use href="#i-sheets"/></svg></div>
                <div class="type-name">Grundriss<br>Grundrisse</div>
                <i class="caret type-caret"></i>
            </div>
            <div class="type-line">
                <div class="type-combo">Grundriss: KG<i class="caret"></i></div>
                <svg class="edit-ic"><use href="#i-edit"/></svg>
                <span>Typ bearbeiten</span>
            </div>

            <div class="section">Grafiken<svg class="fold"><use href="#i-fold"/></svg></div>
            <div class="prop"><span>Ansichtsmaßstab</span><span class="val scale-val">1 : 200</span></div>
            <div class="prop off"><span>Maßstabswert 1:</span><span class="val">200</span></div>
            <div class="prop"><span>Modell anzeigen</span><span class="val">Normal</span></div>
            <div class="prop"><span>Detaillierungsgr...</span><span class="val boxed">Mittel</span></div>
            <div class="prop"><span>Sichtbarkeit der...</span><span class="val">Original anzei...</span></div>
            <div class="prop"><span>Überschreibung...</span><span class="val"><b class="btn">Bearbeiten...</b></span></div>
            <div class="prop"><span>Grafikdarstellun...</span><span class="val"><b class="btn">Bearbeiten...</b></span></div>
            <div class="prop"><span>Unterlage</span><span class="val">Keine</span></div>
            <div class="prop off"><span>Ausrichtung de...</span><span class="val">Grundriss</span></div>
            <div class="prop"><span>Ausrichtung</span><span class="val">Projektnorden</span></div>
            <div class="prop off"><span>Wandverbindu...</span><span class="val">Alle Wandver...</span></div>
            <div class="prop"><span>Disziplin</span><span class="val">Architektonisch</span></div>
            <div class="prop"><span>Position für Far...</span><span class="val">Hintergrund</span></div>
            <div class="prop"><span>Farbschema</span><span class="val"><b class="btn">&lt;Keine Auswahl&gt;</b></span></div>
            <div class="prop"><span>Systemfarbsche...</span><span class="val"><b class="btn">Bearbeiten...</b></span></div>
            <div class="prop"><span>Standardanzeig...</span><span class="val">Keine</span></div>
            <div class="prop"><span>Sonnenbahn</span><span class="val"><i class="check"></i></span></div>

            <div class="section">ID-Daten<svg class="fold"><use href="#i-fold"/></svg></div>
            <div class="prop"><span>Ansichtsvorlage</span><span class="val"><b class="btn">&lt;Keine Auswahl&gt;</b></span></div>
            <div class="prop"><span>Ansichtsname</span><span class="val">KG</span></div>
            <div class="prop off"><span>Abhängigkeit</span><span class="val">Unabhängig</span></div>
            <div class="prop"><span>Titel auf Plan</span><span class="val"></span></div>
            <div class="prop off"><span>Referenziert Plan</span><span class="val"></span></div>
            <div class="prop off"><span>Referenziert Det...</span><span class="val"></span></div>

            <div class="section">Grenzen<svg class="fold"><use href="#i-fold"/></svg></div>
            <div class="prop"><span>Zuschneidebere...</span><span class="val"><i class="check on">✓</i></span></div>
            <div class="prop"><span>Zuschneidebere...</span><span class="val"><i class="check"></i></span></div>
            <div class="prop"><span>Beschriftung zu...</span><span class="val"><i class="check"></i></span></div>
            <div class="prop"><span>Ansichtsbereich</span><span class="val"><b class="btn">Bearbeiten...</b></span></div>
            <div class="prop off"><span>Verknüpfte Ebene</span><span class="val">KG</span></div>
            <div class="prop"><span>Bildausschnitt</span><span class="val">Keine</span></div>
            <div class="prop"><span>Höhenschnitt</span><span class="val"><b class="btn dark">Nicht zuschneiden</b></span></div>

            <div class="section">Phasen<svg class="fold"><use href="#i-fold"/></svg></div>
            <div class="prop"><span>Phasenfilter</span><span class="val">Bestand, Neu ...</span></div>
            <div class="prop"><span>Phase</span><span class="val">Neu</span></div>

            <div class="props-space"></div>
            <footer class="props-foot">
                <a href="#">Hilfe zu Eigenschaften</a>
                <span class="apply">Anwenden</span>
            </footer>
        </aside>
    </main>

    <footer class="status">
        <span class="status-text">Zur Auswahl klicken, TABULATOR für andere Auswahl, STRG zum Hinzufügen, UMSCHALT zum Aufheben der Auswahl.</span>
        <svg class="st-worksets"><use href="#i-worksets"/></svg>
        <div class="st-combo st-combo-a"><i class="caret"></i></div>
        <svg class="st-wand"><use href="#i-wand"/></svg>
        <span class="st-zero">:0</span>
        <svg class="st-design"><use href="#i-design"/></svg>
        <svg class="st-design st-design2"><use href="#i-design2"/></svg>
        <div class="st-combo st-combo-b">Basisvorlage<i class="caret"></i></div>
        <i class="st-check">✓</i>
        <span class="st-press">Drücken &amp; ziehen</span>
        <svg class="st-funnel"><use href="#i-funnel"/></svg>
        <span class="st-count">:0</span>
    </footer>
    <div class="taskbar"></div>
</body>
</html>
```

FILE: styles.css
```css
* {
    box-sizing: border-box;
}

html, body {
    margin: 0;
    padding: 0;
    width: 1905px;
    height: 1023px;
    overflow: hidden;
}

body {
    position: relative;
    font-family: "Noto Sans", sans-serif;
    font-size: 11.4px;
    color: #111;
    background: #f0f0f0;
}

ul {
    list-style: none;
    margin: 0;
    padding: 0;
}

.sprite {
    display: none;
}

/* Title strip and tabs */
.top-strip {
    height: 4px;
    border-bottom: 1px solid #55585c;
    background: linear-gradient(90deg, #6a6f76 0, #6a6f76 485px, #c3cfe0 485px, #b7c4d6 1000px, #44484e 1310px, #ffffff 1325px, #ffffff 1503px, #44484e 1510px, #8c97a3 1905px);
}

.app-button {
    position: absolute;
    left: 0;
    top: 0;
    width: 35px;
    height: 21px;
    padding: 0;
    border: 1px solid #5c5c5c;
    border-top: 0;
    border-radius: 0 0 3px 0;
    background: linear-gradient(#a59a8e, #7a726b);
}

.app-logo {
    display: block;
    width: 100%;
    height: 100%;
}

.tabs {
    display: flex;
    align-items: flex-end;
    height: 20px;
    padding-left: 41px;
    gap: 3px;
    background: #a5a5a5;
    color: #1a1a1a;
}

.tab {
    height: 17px;
    padding: 0 8px;
    line-height: 16px;
    white-space: nowrap;
}

.tab.active {
    border: 1px solid #d4d4d4;
    border-bottom: 0;
    border-radius: 2px 2px 0 0;
    padding: 0 7px;
    background: linear-gradient(#fff, #f1f1f1 60%, #fff);
}

.tab-mini {
    width: 15px;
    height: 11px;
    margin: 0 0 3px 11px;
    border: 1px solid #444;
    border-radius: 2px;
    background: #e6e6e6;
    font-size: 9px;
    line-height: 9px;
    text-align: center;
}

.tab-caret {
    margin: 0 0 1px -1px;
    font-size: 9px;
}

/* Ribbon */
.ribbon {
    display: flex;
    height: 94px;
    background: #fff;
}

.group {
    display: flex;
    flex-direction: column;
    flex: none;
    border-right: 1px solid #d2d2d2;
}

.g-select { width: 65px; }
.g-dim { width: 376px; }
.g-detail { width: 220px; }
.g-text { width: 127px; }
.g-tag { width: 770px; }
.g-fill { width: 133px; }
.g-symbol { width: 99px; border-right: 0; }

.ribbon-rest {
    flex: 1;
    height: 93px;
    background: linear-gradient(#dadada, #9c9c9c);
}

.group-body {
    display: flex;
    height: 76px;
    padding-top: 2px;
}

.group-label {
    height: 17px;
    border-bottom: 1px solid #d8d8d8;
    background: #ededed;
    line-height: 17px;
    text-align: center;
    color: #222;
    position: relative;
}

.caret {
    display: inline-block;
    width: 0;
    height: 0;
    margin-left: 4px;
    border-left: 4px solid transparent;
    border-right: 4px solid transparent;
    border-top: 4px solid #444;
    vertical-align: middle;
}

.caret.tiny {
    margin-left: 7px;
    border-width: 3px 2px 0;
}

.launcher {
    position: absolute;
    right: 4px;
    top: 0;
    font-size: 10px;
}

.modify-btn {
    display: flex;
    flex-direction: column;
    align-items: center;
    width: 45px;
    height: 71px;
    margin: 1px 0 0 8px;
    border: 1px solid #2a7fc4;
    background: linear-gradient(#d2e5f8, #b9d6f4 50%, #a5cbef);
}

.cursor-icon {
    width: 14px;
    height: 22px;
    margin-top: 7px;
}

.modify-btn span {
    margin-top: 8px;
    line-height: 16px;
}

.large {
    display: flex;
    flex-direction: column;
    align-items: center;
    flex: none;
    line-height: 15px;
    text-align: center;
    white-space: nowrap;
}

.large-icon {
    width: 30px;
    height: 30px;
    margin: 4px 0 4px;
}

.l-aligned { width: 67px; margin-left: 5px; }
.l-linear { width: 32px; margin-left: 6px; }
.l-angle { width: 36px; margin-left: 6px; }

.col {
    flex: none;
}

.small {
    display: flex;
    align-items: center;
    height: 24px;
    white-space: nowrap;
}

.small.off {
    color: #a8a8a8;
}

.ic {
    flex: none;
    width: 20px;
    height: 20px;
    margin-right: 3px;
}

.c-dim1 { width: 99px; margin-left: 7px; }
.c-dim2 { width: 108px; }
.c-det1 { width: 92px; margin-left: 6px; }
.c-det2 { width: 120px; }
.c-text { width: 120px; margin-left: 7px; }

.tag-icon {
    width: 30px;
    height: 32px;
    margin: 4px 0 3px;
}

.l-cat { width: 86px; margin-left: 2px; }
.l-all { width: 64px; margin-left: -1px; }
.c-tag1 { width: 144px; margin-left: 7px; }
.c-tag2 { width: 160px; }
.c-tag3 { width: 168px; }

.l-key {
    width: 140px;
    margin-left: -1px;
    padding-left: 3px;
    height: 73px;
    border-left: 1px solid #e4e4e4;
}

.key-icon {
    width: 30px;
    height: 26px;
    margin: 7px 0 7px;
}

.l-key .caret {
    margin: 5px 0 0;
}

.c-fill { width: 126px; margin-left: 7px; }

.l-symbol { width: 44px; margin-left: 3px; }

.symbol-icon {
    width: 32px;
    height: 28px;
    margin: 7px 0 4px;
}

.symbol-grid {
    display: grid;
    grid-template-columns: 24px 24px;
    grid-auto-rows: 24px;
    margin-left: 5px;
    justify-items: center;
    align-items: center;
}

.sg {
    width: 16px;
    height: 20px;
}

.sg:nth-child(n+5) {
    height: 15px;
}

.options-bar {
    height: 35px;
    border-top: 1px solid #fafafa;
    border-bottom: 2px solid #9b9d9f;
    background: linear-gradient(#cfcfcf 0, #cfcfcf 2px, #dfe2e6 2px);
}

/* Workspace */
.workspace {
    display: flex;
    height: 842px;
}

.panel-head {
    display: flex;
    align-items: center;
    justify-content: space-between;
    flex: none;
    height: 20px;
    padding-bottom: 1px;
    background: linear-gradient(#bccade, #d6dfea);
    color: #3d4650;
    white-space: nowrap;
    overflow: hidden;
}

.panel-close {
    flex: none;
    width: 12px;
    height: 12px;
}

.browser {
    display: flex;
    flex-direction: column;
    width: 326px;
    border-right: 1px solid #777b80;
    background: #fff;
}

.browser .panel-head {
    padding-right: 4px;
}

.browser-title {
    margin-left: -3px;
}

.tree-view {
    display: flex;
    height: 804px;
    border-right: 3px solid #e4e6e8;
}

.tree-clip {
    flex: 1;
    overflow: hidden;
}

.row {
    display: flex;
    align-items: center;
    height: 18px;
    white-space: pre;
    color: #000;
}

.root {
    background: linear-gradient(#999 50%, transparent 50%) 7px 0 / 1px 2px repeat-y,
                linear-gradient(#999 50%, transparent 50%) 27px 18px / 1px 2px repeat-y;
}

.box {
    flex: none;
    width: 9px;
    height: 9px;
    border: 1px solid #8d9aa8;
    background: #f2f4f6;
    position: relative;
}

.box::after {
    content: '';
    position: absolute;
    left: 1px;
    top: 3px;
    width: 5px;
    height: 1px;
    background: #333;
}

.box.plus::before {
    content: '';
    position: absolute;
    left: 3px;
    top: 1px;
    width: 1px;
    height: 5px;
    background: #333;
}

.tie {
    flex: none;
    border-top: 1px dotted #888;
}

.top {
    padding-left: 3px;
    background: #fff;
}

.top .tie {
    width: 5px;
}

.view-ic {
    flex: none;
    width: 16px;
    height: 16px;
    margin: 0 6px 0 2px;
}

.sub {
    padding-left: 23px;
}

.sub .tie {
    width: 12px;
    margin-right: 1px;
}

.leaves {
    background: linear-gradient(#999 50%, transparent 50%) 48px 0 / 1px 2px repeat-y;
}

.leaf {
    padding-left: 49px;
}

.leaf::before {
    content: '';
    flex: none;
    width: 13px;
    margin-right: 3px;
    border-top: 1px dotted #888;
}

.leaf:last-child {
    background: linear-gradient(#fff, #fff) 44px 10px / 8px 8px no-repeat;
}

.current {
    padding: 0 4px;
    margin-left: -4px;
    background: #e6e6e6;
    font-weight: 700;
}

/* Scrollbars */
.vscroll {
    display: flex;
    flex-direction: column;
    align-items: center;
    flex: none;
    background: #f0f0f0;
}

.arrow {
    flex: none;
    width: 0;
    height: 0;
}

.arrow.up {
    margin: 6px 0 0;
    border-left: 4px solid transparent;
    border-right: 4px solid transparent;
    border-bottom: 4px solid #555;
}

.arrow.down {
    margin: auto 0 5px;
    border-left: 4px solid transparent;
    border-right: 4px solid transparent;
    border-top: 4px solid #555;
}

.arrow.left {
    border-top: 4px solid transparent;
    border-bottom: 4px solid transparent;
    border-right: 4px solid #555;
}

.arrow.right {
    border-top: 4px solid transparent;
    border-bottom: 4px solid transparent;
    border-left: 4px solid #333;
}

.thumb {
    display: flex;
    align-items: center;
    justify-content: center;
    flex: none;
    border: 1px solid #9ea3a8;
    border-radius: 2px;
    background: linear-gradient(90deg, #f2f2f2, #dcdcdc 50%, #c8c8c8);
}

.tree-scroll {
    width: 17px;
}

.tree-thumb {
    width: 15px;
    height: 388px;
    margin-top: 9px;
}

.grip-h {
    width: 7px;
    height: 7px;
    border-top: 1px solid #555;
    border-bottom: 1px solid #555;
    background: linear-gradient(#555, #555) 0 2px / 100% 1px no-repeat;
}

.hscroll {
    display: flex;
    align-items: center;
    flex: none;
    height: 18px;
    border-right: 3px solid #e4e6e8;
    background: #f0f0f0;
}

.hscroll .arrow.left {
    margin-left: 6px;
}

.hscroll .arrow.right {
    margin-left: 41px;
}

.tree-hthumb {
    width: 237px;
    height: 16px;
    margin-left: 7px;
    background: linear-gradient(#f2f2f2, #dcdcdc 50%, #c8c8c8);
}

.grip-v {
    width: 7px;
    height: 7px;
    border-left: 1px solid #555;
    border-right: 1px solid #555;
    background: linear-gradient(#555, #555) 2px 0 / 1px 100% no-repeat;
}

/* Drawing area */
.view {
    display: flex;
    flex-direction: column;
    width: 1363px;
    margin-left: 7px;
    border-left: 1px solid #777b80;
    border-right: 6px solid #4f5357;
    background: #f0f0f0;
    flex: none;
}

.view-main {
    display: flex;
    height: 824px;
}

.canvas {
    position: relative;
    flex: 1;
    overflow: hidden;
    background: #fff;
}

.frame {
    position: absolute;
    left: 0;
    top: 184px;
    width: 733px;
    bottom: 0;
    border-top: 10px solid #000;
    border-right: 10px solid #000;
    border-radius: 0 4px 0 0;
    background: #f00;
}

.pointer {
    position: absolute;
    left: 719px;
    top: 180px;
    width: 130px;
    height: 110px;
}

.note {
    position: absolute;
    left: 856px;
    top: 125px;
    width: 300px;
    margin: 0;
    font-family: "Liberation Serif", serif;
    font-size: 41px;
    line-height: 40px;
    text-align: center;
    color: #000;
}

.win-ctrl {
    position: absolute;
    right: 5px;
    top: 7px;
    width: 48px;
    height: 14px;
}

.nav-bar {
    position: absolute;
    right: 2px;
    top: 29px;
    width: 34px;
    height: 155px;
    border: 2px solid #c6c8ca;
    border-radius: 5px;
    background: #fbfbfb;
}

.nav-bar svg {
    display: block;
    width: 100%;
    height: 100%;
}

.two-d {
    font-family: "Liberation Sans", sans-serif;
    font-size: 10px;
    fill: #4a7db5;
}

.view-scroll {
    width: 21px;
    padding-right: 4px;
}

.view-thumb {
    width: 14px;
    height: 15px;
    margin-top: 394px;
    background: linear-gradient(#f6f6f6, #d8d8d8);
}

.view-bar {
    display: flex;
    align-items: center;
    flex: none;
    height: 18px;
}

.scale {
    width: 79px;
    padding-left: 22px;
    color: #111;
}

.view-icons {
    display: flex;
    align-items: center;
    width: 194px;
    gap: 6px;
}

.vb {
    flex: none;
    width: 15px;
    height: 15px;
}

.vb-small {
    width: 10px;
}

.view-bar .arrow.left {
    margin-right: 515px;
}

.view-hthumb {
    width: 16px;
    height: 15px;
    background: linear-gradient(#f6f6f6, #d8d8d8);
}

.view-bar .arrow.right {
    margin-left: 518px;
}

.size-grip {
    width: 8px;
    height: 8px;
    margin-left: 12px;
    background: radial-gradient(circle, #aaa 40%, transparent 45%) 0 0 / 3px 3px;
}

/* Properties */
.props {
    display: flex;
    flex-direction: column;
    flex: 1;
    min-width: 0;
    border-left: 1px solid #9a9ea3;
    background: #fff;
}

.props-head {
    padding-right: 1px;
}

.props-title {
    margin-left: -1px;
}

.type-picker {
    display: flex;
    flex: none;
    height: 74px;
    padding: 4px 0 4px 3px;
    background: linear-gradient(#fff, #f2f2f2);
    position: relative;
}

.type-thumb {
    display: flex;
    align-items: center;
    justify-content: center;
    width: 66px;
    border: 1px solid #d0d0d0;
    background: linear-gradient(#fff, #e8e8e8);
}

.sheets {
    width: 32px;
    height: 32px;
}

.type-name {
    margin: 18px 0 0 4px;
    line-height: 16px;
    color: #555;
}

.type-caret {
    position: absolute;
    right: 0;
    top: 33px;
}

.type-line {
    display: flex;
    align-items: center;
    flex: none;
    height: 24px;
    padding-left: 1px;
    white-space: nowrap;
}

.type-combo {
    display: flex;
    align-items: center;
    justify-content: space-between;
    flex: none;
    width: 96px;
    height: 22px;
    padding: 0 4px;
    border: 1px solid #8a8a8a;
    border-radius: 3px;
    background: linear-gradient(#f6f6f6, #dedede);
    font-size: 11px;
}

.edit-ic {
    flex: none;
    width: 18px;
    height: 18px;
    margin: 0 3px 0 7px;
}

.section {
    display: flex;
    align-items: center;
    justify-content: space-between;
    flex: none;
    height: 18px;
    padding: 0 3px 2px 5px;
    background: #dcdcdc;
}

.fold {
    width: 8px;
    height: 10px;
}

.prop {
    display: grid;
    grid-template-columns: 105px 1fr;
    flex: none;
    height: 18px;
    border-bottom: 1px dotted #777;
    line-height: 15px;
    white-space: nowrap;
    overflow: hidden;
}

.prop > span:first-child {
    padding-left: 11px;
    border-right: 1px dotted #777;
    overflow: hidden;
}

.prop.off {
    color: #8f8f8f;
}

.val {
    padding-left: 5px;
    overflow: hidden;
}

.scale-val {
    padding-left: 7px;
}

.val.boxed {
    border: 1px solid #000;
    line-height: 13px;
    padding-left: 4px;
}

.val:has(.btn) {
    padding-left: 1px;
}

.btn {
    display: block;
    height: 17px;
    border: 1px solid #aaa;
    border-radius: 2px;
    background: linear-gradient(#fafafa, #d9d9d9);
    font-weight: 400;
    line-height: 16px;
    text-align: center;
    color: #111;
}

.btn.dark {
    border-color: #444;
    background: #f4f4f4;
}

.check {
    display: block;
    width: 12px;
    height: 12px;
    margin: 3px 0 0 0;
    border: 1px solid #9a9a9a;
    background: linear-gradient(135deg, #ddd, #fafafa);
    font-size: 10px;
    font-style: normal;
    line-height: 10px;
    text-align: center;
    color: #3c5fa0;
}

.props-space {
    flex: 1;
}

.props-foot {
    display: flex;
    align-items: center;
    justify-content: space-between;
    flex: none;
    height: 28px;
    padding-left: 2px;
    background: #f0f0f0;
}

.props-foot a {
    color: #0a62c4;
}

.apply {
    width: 73px;
    height: 21px;
    border: 1px solid #ccc;
    border-radius: 3px;
    background: #f4f4f4;
    line-height: 19px;
    text-align: center;
    color: #8e8e8e;
}

/* Status bar */
.status {
    display: flex;
    align-items: center;
    height: 23px;
    padding-top: 1px;
    border-top: 1px solid #8f9296;
    background: linear-gradient(#e6e6e6, #d2d2d2 50%, #c2c2c2);
    white-space: nowrap;
}

.status-text {
    width: 912px;
    flex: none;
    margin-left: -1px;
}

.st-worksets {
    flex: none;
    width: 14px;
    height: 20px;
    margin-left: 0;
}

.st-combo {
    display: flex;
    align-items: center;
    justify-content: space-between;
    flex: none;
    height: 19px;
    padding-right: 5px;
    background: #fff;
    color: #8b8b8b;
}

.st-combo .caret {
    border-left-width: 3px;
    border-right-width: 3px;
    border-top-color: #999;
}

.st-combo-a {
    width: 206px;
    margin-left: 11px;
}

.st-wand {
    flex: none;
    width: 14px;
    height: 18px;
    margin-left: 12px;
}

.st-zero {
    flex: none;
    width: 32px;
    padding-left: 2px;
    font-size: 11px;
}

.st-design {
    flex: none;
    width: 18px;
    height: 18px;
}

.st-design2 {
    margin-left: 7px;
}

.st-combo-b {
    width: 154px;
    margin-left: 10px;
    padding-left: 2px;
}

.st-check {
    flex: none;
    width: 13px;
    height: 13px;
    margin-left: 286px;
    border: 1px solid #555;
    background: #fff;
    font-size: 11px;
    font-style: normal;
    font-weight: 700;
    line-height: 11px;
    text-align: center;
    color: #2d9a2d;
}

.st-press {
    margin-left: 2px;
}

.st-funnel {
    flex: none;
    width: 16px;
    height: 16px;
    margin-left: 18px;
}

.st-count {
    font-size: 11px;
}

.taskbar {
    height: 5px;
    background: linear-gradient(90deg, #2f3a44 0, #2f3a44 116px, #e8e8e8 116px, #e8e8e8 170px, #2f3a44 170px, #2f3a44 178px, #e8e8e8 178px, #e8e8e8 236px, #2f3a44 236px, #2f3a44 426px, #e8e8e8 426px, #e8e8e8 484px, #2f3a44 484px, #2f3a44 550px, #e8e8e8 550px, #e8e8e8 604px, #2f3a44 604px, #2f3a44 611px, #e8e8e8 611px, #e8e8e8 670px, #2f3a44 670px);
    border-top: 2px solid #2f3a44;
}
```
